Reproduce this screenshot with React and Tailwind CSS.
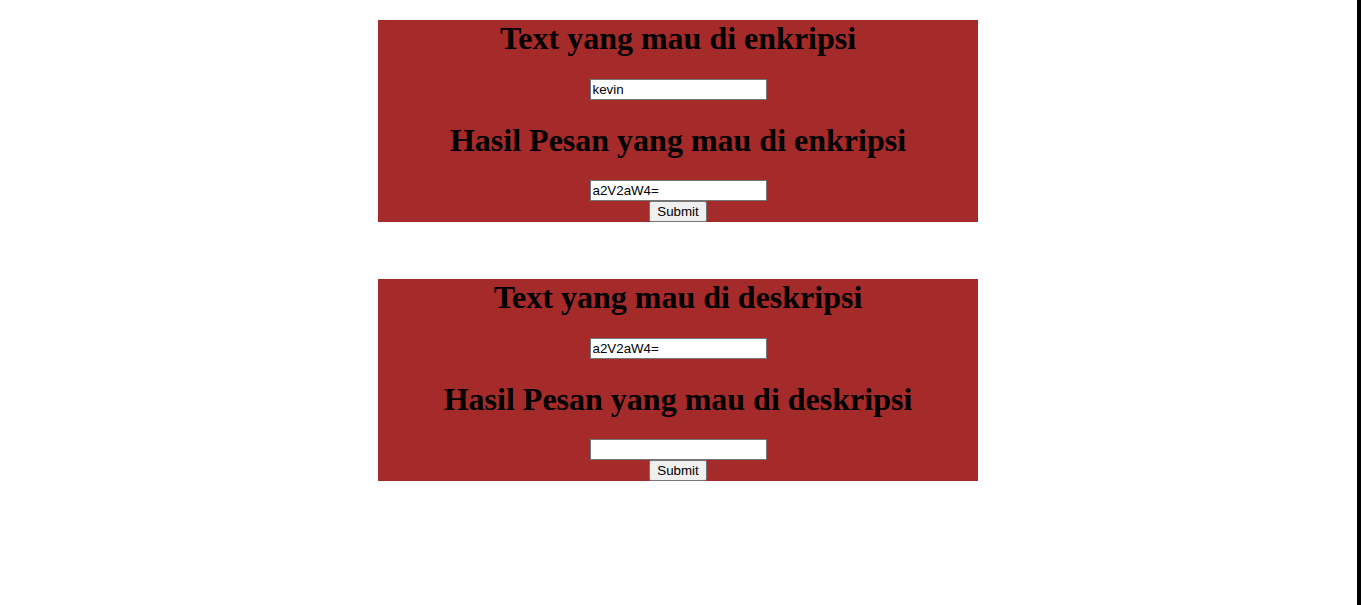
import { useState } from "react";

const serif = { fontFamily: '"Liberation Serif", "Times New Roman", serif' };

const Panel = ({ title, resultTitle, initial, result, className = "" }) => {
  const [text, setText] = useState(initial);
  const [hasil, setHasil] = useState(result);

  return (
    <form
      className={`w-[600px] bg-[#a52a2a] flex flex-col items-center ${className}`}
      onSubmit={(e) => e.preventDefault()}
    >
      <h1 className="text-[32px] leading-[37px] font-bold text-black mb-[22px] font-['Liberation_Serif',serif]">
        {title}
      </h1>
      <input
        type="text"
        value={text}
        onChange={(e) => setText(e.target.value)}
        className="w-[177px] h-[21px] bg-white border border-[#767676] px-[2px] text-[13.33px] text-black outline-none font-['Liberation_Sans',Arial,sans-serif]"
      />
      <h1 className="text-[32px] leading-[37px] font-bold text-black mt-[22px] mb-[21px] font-['Liberation_Serif',serif]">
        {resultTitle}
      </h1>
      <input
        type="text"
        value={hasil}
        onChange={(e) => setHasil(e.target.value)}
        className="w-[177px] h-[21px] bg-white border border-[#767676] px-[2px] text-[13.33px] text-black outline-none font-['Liberation_Sans',Arial,sans-serif]"
      />
      <button
        type="submit"
        className="w-[58px] h-[21px] bg-[#efefef] border border-[#767676] rounded-[2px] text-[13.33px] text-black leading-none font-['Liberation_Sans',Arial,sans-serif]"
      >
        Submit
      </button>
    </form>
  );
};

export default function App() {
  return (
    <div className="flex min-h-[605px] bg-white" style={serif}>
      <div className="flex-1 flex flex-col items-center pt-[20px] pr-[1px]">
        <Panel
          title="Text yang mau di enkripsi"
          resultTitle="Hasil Pesan yang mau di enkripsi"
          initial="kevin"
          result="a2V2aW4="
        />
        <Panel
          className="mt-[57px]"
          title="Text yang mau di deskripsi"
          resultTitle="Hasil Pesan yang mau di deskripsi"
          initial="a2V2aW4="
          result=""
        />
      </div>
      <div className="w-[4px] bg-black" />
    </div>
  );
}
